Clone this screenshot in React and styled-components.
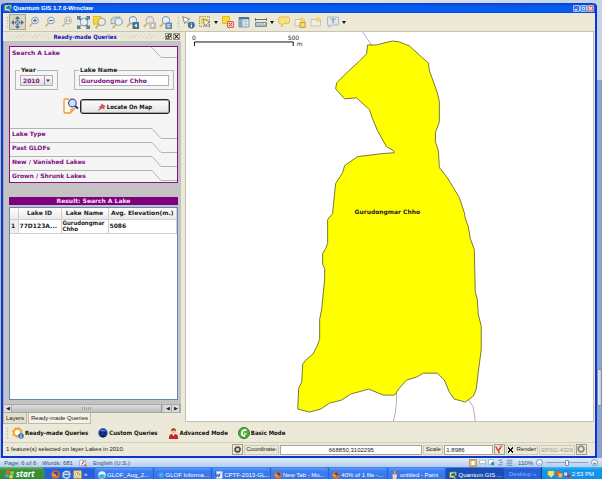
import { useState } from "react";
import styled, { createGlobalStyle, css } from "styled-components";

const verdana = `"DejaVu Sans", Verdana, sans-serif`;
const condensed = `"DejaVu Sans Condensed", "DejaVu Sans", sans-serif`;
const tahoma = `"Liberation Sans", Tahoma, sans-serif`;

// ---------- icons ----------

const Icon = ({ size = 12, children }) => (
  <svg width={size} height={size} viewBox="0 0 12 12" fill="none" aria-hidden="true">
    {children}
  </svg>
);

const Lens = ({ x = 7, y = 4.5, color = "#8ba0b2", fill = "#e4eef5" }) => (
  <>
    <path d={`M${x - 2.4} ${y + 2.6}L${x - 5.6} ${y + 6}`} stroke="#d9ab62" strokeWidth="1.5" />
    <circle cx={x} cy={y} r="3.4" fill={fill} stroke={color} strokeWidth="1" />
  </>
);

const PanIcon = () => (
  <Icon size={13}>
    <path d="M6 0L8.4 2.8H3.6zM6 12L3.6 9.2H8.4zM0 6L2.8 3.6V8.4zM12 6L9.2 8.4V3.6z" fill="#456f91" />
    <path d="M6 2.6L7.5 4.1 6 5.6 4.5 4.1zM6 6.4L7.5 7.9 6 9.4 4.5 7.9zM2.9 6L4.3 4.6 5.7 6 4.3 7.4zM9.1 6L7.7 7.4 6.3 6 7.7 4.6z" fill="#5d83a2" />
  </Icon>
);

const ZoomInIcon = () => (
  <Icon>
    <Lens />
    <path d="M5.2 4.5H8.8M7 2.7V6.3" stroke="#3f6685" />
  </Icon>
);

const ZoomOutIcon = () => (
  <Icon>
    <Lens />
    <path d="M5.2 4.5H8.8" stroke="#3f6685" />
  </Icon>
);

const ZoomActualIcon = () => (
  <Icon>
    <path d="M4.6 7L1.4 10.4" stroke="#c9b28a" strokeWidth="1.4" />
    <circle cx="7" cy="4.5" r="3.6" fill="#e8e6dc" stroke="#b3b3ad" />
    <path d="M5.5 3V6M8.5 3V6M7 3.4V4M7 5V5.6" stroke="#99998f" strokeWidth=".8" />
  </Icon>
);

const ZoomFullIcon = () => (
  <Icon size={13}>
    <Lens x={6.5} y={5.5} />
    <path d="M0 0H4L2.8 1.2 4.4 2.8 2.8 4.4 1.2 2.8 0 4zM12 0V4L10.8 2.8 9.2 4.4 7.6 2.8 9.2 1.2 8 0zM12 12H8L9.2 10.8 7.6 9.2 9.2 7.6 10.8 9.2 12 8zM0 12V8L1.2 9.2 2 8.4 3.4 9.8 2.8 10.8 4 12z" fill="#5a7d99" />
  </Icon>
);

const ZoomSelectionIcon = () => (
  <Icon size={13}>
    <path d="M.5 .5H7.5V7.5H.5z" fill="#f7dc35" stroke="#e2bd26" />
    <Lens x={8} y={5.4} fill="#f1eecb" />
  </Icon>
);

const ZoomLayerIcon = () => (
  <Icon size={13}>
    <path d="M1 3L4 1H9L7 7H1z" fill="#d4d9df" stroke="#a3adb6" />
    <Lens x={8} y={5.2} />
  </Icon>
);

const ZoomLastIcon = ({ muted, flip }) => (
  <Icon size={13}>
    <Lens x={6.4} y={4} color={muted ? "#b3b3ad" : "#8ba0b2"} fill={muted ? "#e8e6dc" : "#e4eef5"} />
    <path d="M6 5.6H12V12H6z" fill={muted ? "#bdbcb1" : "#46708f"} />
    <path d={flip ? "M8 7L10.4 8.8 8 10.6z" : "M10 7L7.6 8.8 10 10.6z"} fill="#fff" />
  </Icon>
);

const RefreshLensIcon = () => (
  <Icon size={13}>
    <Lens x={6.4} y={4} />
    <path d="M6 6H12V12H6z" fill="#6689a5" />
    <path d="M7.3 8.2H10.4M10.6 10H7.5" stroke="#fff" strokeWidth=".9" />
  </Icon>
);

const IdentifyIcon = () => (
  <Icon size={13}>
    <path d="M.6 .6L7 2.8 4.8 4 7 6.4 5.8 7.4 3.6 5 2.4 7z" fill="#fff" stroke="#6f7573" strokeWidth=".8" />
    <circle cx="8.6" cy="8.4" r="3.2" fill="#416c93" />
    <path d="M8.6 6.2V7M8.6 7.8V10.4" stroke="#fff" strokeWidth="1.1" />
  </Icon>
);

const SelectIcon = () => (
  <Icon size={12}>
    <path d="M.5 .5H10.5V10.5H.5z" fill="#e9e2b4" stroke="#a09a79" strokeDasharray="1.5 1" />
    <path d="M2 2H9V8H2z" fill="#f3da3f" />
    <path d="M4 3L11 6 8.6 7 11 10 9.6 11 7.4 8.2 5.8 10z" fill="#f2f2ec" stroke="#75766c" strokeWidth=".8" />
  </Icon>
);

const DeselectIcon = () => (
  <Icon size={12}>
    <path d="M.5 .5H7.5V7.5H.5z" fill="#f7dc35" stroke="#e2bd26" />
    <path d="M5.6 5.6H11.4V11.4H5.6z" fill="#f4d8cf" stroke="#d3584c" />
    <path d="M7 7L10 10M10 7L7 10" stroke="#cf3a34" />
  </Icon>
);

const TableIcon = () => (
  <Icon size={12}>
    <path d="M1 1.5H11V11H1z" fill="#e9f1f5" stroke="#7f99ab" />
    <path d="M1 1H11V3.4H1z" fill="#4d7594" />
    <path d="M1 3.4H4.2V11H1z" fill="#7d9cb3" />
    <path d="M4.2 3V11M7.6 3V11M1 5.5H11M1 8.2H11" stroke="#a6bac7" strokeWidth=".8" />
  </Icon>
);

const MeasureIcon = () => (
  <Icon size={12}>
    <path d="M.5 3.5H11.5M.5 2V5M11.5 2V5" stroke="#63717a" />
    <path d="M.5 6.5H11.5V10.5H.5z" fill="#aab7bf" stroke="#7f8b92" />
    <path d="M3 7V9M5.2 7V8.4M7.4 7V9M9.6 7V8.4" stroke="#eef1f2" strokeWidth=".8" />
  </Icon>
);

const TipIcon = () => (
  <Icon size={12}>
    <path d="M2.4 1H9.8Q11.5 1 11.5 2.8V6Q11.5 7.6 9.8 7.6H6L3.4 11V7.6H2.4Q.6 7.6 .6 6V2.8Q.6 1 2.4 1z" fill="#f8e27c" stroke="#d9bb5c" />
  </Icon>
);

const BookmarkIcon = ({ extra }) => (
  <Icon size={12}>
    <path d="M1 3.5H10.5V10H1z" fill="#f1eee0" stroke="#c9c4b0" />
    <path d="M8 .8L8.8 2.4 10.6 2.8 9.4 4 9.6 5.6 8.2 4.8 6.8 5.6 7 4 5.8 2.8 7.4 2.4z" fill="#f6d95a" stroke="#dfc25c" strokeWidth=".5" />
    {extra && <path d="M6 6.5H11.2V11.4H6z" fill="#f7dc70" stroke="#c79a28" />}
  </Icon>
);

const TextIcon = () => (
  <Icon size={12}>
    <path d="M.5 1H11.5V9H5L2 11.4V9H.5z" fill="#dfe7ee" stroke="#a9b8c4" />
    <path d="M3.6 3H8.6M6.1 3V7.6" stroke="#8195a3" strokeWidth="1.2" />
  </Icon>
);

const FindPageIcon = () => (
  <svg width="16" height="17" viewBox="0 0 16 17" fill="none" aria-hidden="true">
    <path d="M6 1H2.6Q1 1 1 2.6V13.4Q1 15 2.6 15H7L12 10" stroke="#f0962a" strokeWidth="1.3" fill="#fffaf0" />
    <path d="M7.4 15.6V10.6H12.4z" fill="#f7a53a" />
    <circle cx="9.4" cy="5" r="3.8" fill="#cfe3f5" stroke="#3f4f9c" strokeWidth="1.2" />
    <path d="M12 8L15 10.6" stroke="#27347f" strokeWidth="2" />
  </svg>
);

const PinIcon = () => (
  <Icon size={8}>
    <path d="M5.4 .6L11.4 5 9.6 6.2 9.4 9.6 6.8 8.2 4.4 9 .4 11.6 3 7.8 1.4 4.8 4.4 4.2z" fill="#d8535b" />
    <path d="M3 7.8L.4 11.6" stroke="#666" />
  </Icon>
);

const GearIcon = ({ size = 12, color = "#f2a52d", badge, hole = "#fff" }) => (
  <Icon size={size}>
    <circle cx="5.4" cy="5.4" r="3.6" fill={hole} stroke={color} strokeWidth="2" />
    <circle cx="5.4" cy="5.4" r="4.8" stroke={color} strokeWidth="1.2" strokeDasharray="1.9 1.87" />
    {badge && (
      <>
        <circle cx="9" cy="9" r="2.8" fill="#2d78c8" />
        <path d="M9 7.4V8M9 8.6V10.8" stroke="#fff" />
      </>
    )}
  </Icon>
);

const GlobeIcon = () => (
  <Icon size={10}>
    <circle cx="6" cy="6" r="5.6" fill="#173f9e" />
    <path d="M2 3Q6 1 10 3Q6 4.6 2 3z" fill="#4f8be0" />
    <path d="M2.5 6.2H5M7 6.2H9.5M3.6 9Q6 10.4 8.4 9" stroke="#07123f" strokeWidth="1.4" />
  </Icon>
);

const PersonIcon = () => (
  <Icon size={11}>
    <path d="M1 12Q.6 7 4 6.6H8Q11.4 7 11 12z" fill="#c92228" />
    <path d="M4.6 6.6L6 9 7.4 6.6z" fill="#fff" />
    <circle cx="6" cy="3.6" r="2.6" fill="#efbd92" />
    <path d="M3.4 3.2Q3.2 .2 6 .2T8.6 3.2Q6 1.6 3.4 3.2z" fill="#8a3d25" />
  </Icon>
);

const BasicIcon = () => (
  <Icon>
    <circle cx="6" cy="6" r="5.5" fill="#4fae3b" stroke="#2d7e28" />
    <path d="M8.4 3.4Q5 2 4 5.4T7 9" stroke="#fff" strokeWidth="1.8" />
    <path d="M5.8 5.4L9 6.4 6.4 8.4z" fill="#d8f3c8" />
  </Icon>
);

const QgisIcon = ({ size = 8 }) => (
  <Icon size={size}>
    <path d="M1 2H6V4H3.4V7H6V9.6H1z" fill="#e9e14a" />
    <path d="M6 1H11V7H8.6V3.4H6z" fill="#8bd04a" />
    <path d="M6 6L10.4 11H7z" fill="#f5f07a" />
  </Icon>
);

const FirefoxIcon = ({ size = 9 }) => (
  <Icon size={size}>
    <circle cx="6" cy="6" r="5.4" fill="#e9711c" />
    <circle cx="6.6" cy="5" r="3" fill="#35518f" />
    <path d="M1 4Q3 6 6.4 5.6 8 7.6 4 8.4 1.4 8 1 4z" fill="#f7a63a" />
  </Icon>
);

const IeIcon = () => (
  <Icon size={9}>
    <path d="M10.4 7.6A4.6 4.6 0 1 1 10.6 6H2.6" stroke="#b9e1ff" strokeWidth="2" />
    <path d="M1 10Q2 4 11 1.4" stroke="#f2cf55" />
  </Icon>
);

const OutlookIcon = () => (
  <Icon size={9}>
    <path d="M1 1H11V11H1z" fill="#f5e2ac" stroke="#d09d36" />
    <circle cx="6" cy="6" r="2.8" fill="#fff" stroke="#c68a2a" />
    <path d="M6 4.2V6H7.6" stroke="#4a5f93" />
  </Icon>
);

const WordIcon = () => (
  <Icon size={8}>
    <path d="M2 .5H11V11.5H2z" fill="#f3f7fd" stroke="#9db6db" />
    <path d="M.6 3L2.4 9 4.2 4.6 6 9 7.8 3" stroke="#2c56a5" strokeWidth="1.4" />
  </Icon>
);

const DiscIcon = () => (
  <Icon size={8}>
    <circle cx="6" cy="6" r="5.6" fill="#dff5ff" />
    <path d="M1 7Q6 3 11 7Q9 11.4 6 11.4T1 7z" fill="#35b3de" />
  </Icon>
);

const SparkIcon = () => (
  <Icon size={8}>
    <path d="M6 1V11M1 6H11M3 3L9 9M9 3L3 9" stroke="#4fc3ef" strokeWidth="1.2" />
  </Icon>
);

const PaintIcon = () => (
  <Icon size={8}>
    <path d="M2 5H9L8 12H3z" fill="#e8dcc0" />
    <path d="M3 5L1.6 .6M5.6 5V0M8 5L10.4 1" stroke="#d8503c" strokeWidth="1.6" />
    <path d="M5.6 5V0" stroke="#f0c33b" strokeWidth="1.6" />
  </Icon>
);

const FlagIcon = () => (
  <Icon size={10}>
    <path d="M1.6 2Q3.8 .6 5.8 2L5 5.6Q3 4.4 .8 5.6z" fill="#ee5a2b" />
    <path d="M6.6 2.4Q8.8 3.6 11 2.4L10.2 6Q8 7.2 5.8 6z" fill="#8fd14a" />
    <path d="M.6 6.6Q2.8 5.4 4.8 6.6L4 10.2Q2 9 0 10.2z" fill="#5b9df0" />
    <path d="M5.6 7Q7.8 8.2 10 7L9.2 10.6Q7 11.8 4.8 10.6z" fill="#f8cf3d" />
  </Icon>
);

// ---------- layout ----------

const GlobalStyle = createGlobalStyle`
  * {
    box-sizing: border-box;
  }
  body {
    margin: 0;
    background: #dbe7f5;
    font-family: ${tahoma};
    font-size: 6px;
    line-height: 8px;
    color: #222;
  }
  button, input, select {
    font: inherit;
    color: inherit;
    margin: 0;
    padding: 0;
    border: 0;
    background: none;
    border-radius: 0;
  }
  svg {
    display: block;
    flex: none;
  }
`;

const Desktop = styled.div`
  display: flex;
  flex-direction: column;
  min-height: 100vh;
`;

const Backdrop = styled.div`
  flex: 1;
  display: flex;
  padding: 3px 0 0 1px;
  background: linear-gradient(90deg, #aebfd8, #d9e3ef 20%, #e1e3e6 60%, #c4d3ea);
`;

const BackScroll = styled.div`
  display: flex;
  flex-direction: column;
  justify-content: flex-end;
  width: 5px;
  margin-top: 77px;
  padding-bottom: 52px;
  background: #8aa2cf;

  span {
    height: 37px;
    border: 1px solid #8290b0;
    background: linear-gradient(90deg, #e6eaf2, #bfc9de);
  }
`;

const Window = styled.main`
  flex: 1;
  display: flex;
  flex-direction: column;
  border: 2px solid #0a35d8;
  border-top: 0;
  border-radius: 4px 4px 0 0;
  background: #ece9d8;
`;

const TitleBar = styled.header`
  display: flex;
  align-items: center;
  gap: 1px;
  height: 10px;
  padding: 0 1px 0 1px;
  border-radius: 3px 3px 0 0;
  background: linear-gradient(#0a3fc4, #0759ee 30%, #0560f5 80%, #0347cf);
  color: #fff;

  h1 {
    flex: 1;
    margin: 0;
    font: bold 6px/10px ${tahoma};
  }
`;

const WindowButtons = styled.div`
  display: flex;
`;

const WindowButton = styled.button`
  width: 7px;
  height: 7px;
  border: 1px solid #a9c0f4;
  border-radius: 1px;
  background: ${({ $close }) => ($close ? "#e3552f" : "#3f74ea")};
`;

const ToolBar = styled.div`
  display: flex;
  align-items: center;
  height: 19px;
  padding-left: 3px;
  border-bottom: 1px solid #c8c4b2;
`;

const Grip = styled.span`
  flex: none;
  width: 3px;
  height: 13px;
  background: radial-gradient(#c4c0af 40%, transparent 50%) 0 0 / 3px 3px;
`;

const ToolGroup = styled.div`
  display: flex;
  width: ${({ $width }) => $width}px;
  margin-right: ${({ $gap = 0 }) => $gap}px;
`;

const Tool = styled.button`
  flex: 1;
  display: flex;
  align-items: center;
  justify-content: center;
  gap: 3px;
  height: 16px;
  border: 1px solid transparent;
  ${({ $menu }) =>
    $menu &&
    css`
      flex: 0 0 24px;
      &::after {
        content: "";
        border: 2px solid transparent;
        border-top: 3px solid #111;
        border-bottom: 0;
      }
    `}
  ${({ $pressed }) =>
    $pressed &&
    css`
      border-color: #aaa795;
      background: #d9d5c3;
    `}
`;

const Workspace = styled.div`
  flex: 1;
  display: flex;
`;

const Dock = styled.aside`
  display: flex;
  flex-direction: column;
  width: 178px;
`;

const DockTitle = styled.div`
  display: flex;
  align-items: center;
  gap: 1px;
  height: 9px;
  padding: 0 1px 0 3px;

  h2 {
    margin: 0 2px;
    font: bold 6px/9px ${condensed};
    color: #1414c8;
  }
`;

const Hatch = styled.span`
  flex: 1;
  height: 5px;
  background: repeating-linear-gradient(135deg, #ddd9c9 0 1px, transparent 1px 3px);
`;

const DockButton = styled.button`
  display: flex;
  align-items: center;
  justify-content: center;
  width: 7px;
  height: 7px;
  border: 1px solid #98958a;
  background: #f5f3ea;
`;

const DockBody = styled.div`
  flex: 1;
  display: flex;
  flex-direction: column;
  padding: 5px 3px 4px 5px;
  border-left: 1px solid #aaa;
  background: #c3c3c3;
`;

const Accordion = styled.section`
  border: 1px solid #8a108a;
  background: #f5f5f5;
`;

const SectionHead = styled.button`
  display: flex;
  width: 100%;
  height: 14px;
  font: bold 6px/10px ${verdana};
  color: #80107f;
  text-align: left;

  span {
    flex: 1;
    height: 14px;
    padding-left: 2px;
    border-top: 1px solid ${({ $first }) => ($first ? "transparent" : "#b4b4b4")};
  }

  &:last-child,
  &:last-child span,
  &:last-child svg {
    height: 12px;
  }
`;

const SearchForm = styled.form`
  padding: 4px 3px 13px 5px;
`;

const Fields = styled.div`
  display: flex;
  justify-content: space-between;
`;

const Group = styled.fieldset`
  width: ${({ $width }) => $width}px;
  min-width: 0;
  margin: 0;
  padding: 0 4px 3px;
  border: 1px solid #b6b6b6;

  legend {
    padding: 0 1px;
    font: bold 6px/10px ${verdana};
    color: #222;
  }
`;

const fieldBox = css`
  display: block;
  width: 100%;
  height: 11px;
  border: 1px solid #b0b0b0;
  background-color: #fff;
  font: bold 6px/9px ${verdana};
  color: #80107f;
`;

const TextField = styled.input`
  ${fieldBox}
  padding: 0 1px;
`;

const SelectWrap = styled.div`
  display: grid;
  align-items: center;

  select,
  svg {
    grid-area: 1 / 1;
  }

  svg {
    justify-self: end;
    pointer-events: none;
  }
`;

const YearSelect = styled.select`
  ${fieldBox}
  appearance: none;
  padding-left: 2px;
  background: linear-gradient(#fafafa, #dedede);
`;

const Actions = styled.div`
  display: flex;
  align-items: center;
  justify-content: flex-end;
  gap: 1px;
  margin-top: 8px;
  padding-right: 4px;
`;

const LocateButton = styled.button`
  display: flex;
  align-items: center;
  justify-content: center;
  gap: 1px;
  width: 90px;
  height: 15px;
  border: 1px solid #222;
  border-radius: 3px;
  background: linear-gradient(#fdfdfd, #e3e3e3);
  box-shadow: inset 0 0 0 1px #9aa3b0;
  font: bold 6px/12px ${condensed};
  color: #111;
`;

const ResultTitle = styled.h3`
  margin: 14px 0 2px;
  background: #7f007f;
  font: bold 6px/8px ${verdana};
  text-align: center;
  color: #f5e4f5;
`;

const ResultBox = styled.div`
  flex: 1;
  border: 1px solid #5f86bd;
  background: #fff;
`;

const ResultTable = styled.table`
  width: 100%;
  table-layout: fixed;
  border-collapse: collapse;
  font: bold 6px/6px ${verdana};
  color: #222;

  th,
  td {
    height: 14px;
    padding: 0 1px;
    border: 1px solid #cfcfcf;
    border-width: 0 1px 1px 0;
    text-align: left;
    white-space: nowrap;
  }

  thead th {
    height: 11px;
    background: linear-gradient(#fff, #e9e9e9);
    text-align: center;
  }

  tbody th {
    background: #eee;
  }
`;

const NameCell = styled.td`
  font-family: ${condensed};
`;

const ScrollBar = styled.div`
  display: flex;
  height: 9px;
  border: 1px solid #a9a9a9;
  background: #c9c9c9;
`;

const ScrollButton = styled.button`
  width: 8px;
  background: #dcdcdc;
  border-right: 1px solid #aaa;
  font-size: 5px;
  line-height: 7px;
`;

const ScrollThumb = styled.div`
  flex: 1;
  margin-right: 2px;
  border-right: 1px solid #999;
  background:
    repeating-linear-gradient(90deg, #a5a5a5 0 1px, transparent 1px 2px) center / 9px 3px no-repeat,
    linear-gradient(#dedede, #bcbcbc);
`;

const DockTabs = styled.div`
  display: flex;
  gap: 1px;
  height: 11px;
`;

const DockTab = styled.button`
  padding: 0 2px;
  border: 1px solid #bdb9a8;
  border-top: 0;
  background: ${({ $active }) => ($active ? "#f4f2e7" : "#e3dfcd")};
  font: 6px/9px ${tahoma};
`;

const MapPane = styled.div`
  flex: 1;
  display: flex;
  margin: 0 1px 2px 4px;
  border: 1px solid #c4c0b0;
  border-top: 0;
  background: #fff;

  svg {
    flex: 1;
    width: 100%;
    min-width: 0;
    height: auto;
  }
`;

const ModeBar = styled.nav`
  display: flex;
  align-items: center;
  gap: 10px;
  height: 18px;
  padding-left: 3px;

  span {
    margin-right: -7px;
  }
`;

const ModeButton = styled.button`
  display: flex;
  align-items: center;
  gap: 1px;
  font: bold 6px/12px ${condensed};
  color: #111;
`;

const StatusBar = styled.footer`
  display: flex;
  align-items: center;
  gap: 1px;
  height: 14px;
  padding: 0 8px 0 3px;
  border-top: 1px solid #d5d1c0;
  font: 6px/9px ${tahoma};

  p {
    flex: 1;
    margin: 0;
  }
`;

const StatusCell = styled.label`
  display: flex;
  align-items: center;
  justify-content: center;
  gap: 3px;
  min-width: ${({ $width = 0 }) => $width}px;
  height: 10px;
  padding: 0 1px;
  border: 1px solid #cdc9b8;
`;

const StatusButton = styled.button`
  display: flex;
  align-items: center;
  justify-content: center;
  width: 11px;
  height: 11px;
  border: 1px solid #a19e8e;
`;

const StatusInput = styled.input`
  width: ${({ $width }) => $width}px;
  height: 10px;
  padding: 0 1px;
  border: 1px solid #a8a593;
  background: #fff;
  text-align: ${({ $align = "left" }) => $align};
`;

const Epsg = styled.span`
  padding: 0 1px;
  border: 1px solid #cdc9b8;
  line-height: 8px;
  color: #a09d8f;
`;

const Tick = styled.input`
  appearance: none;
  width: 5px;
  height: 6px;

  &:checked {
    background:
      linear-gradient(45deg, transparent 38%, #111 38% 62%, transparent 62%),
      linear-gradient(-45deg, transparent 38%, #111 38% 62%, transparent 62%);
  }
`;

const WordStatus = styled.div`
  display: flex;
  align-items: center;
  gap: 6px;
  height: 9px;
  padding: 0 4px;
  background: linear-gradient(#e3edfb, #b4cdf0);
  color: #34527f;
`;

const Zoom = styled.div`
  display: flex;
  align-items: center;
  gap: 3px;
  margin-left: auto;

  input {
    appearance: none;
    width: 42px;
    height: 7px;
    background: linear-gradient(#8aa5cc, #8aa5cc) center / 100% 1px no-repeat;
  }

  input::-webkit-slider-thumb {
    appearance: none;
    width: 4px;
    height: 6px;
    border: 1px solid #7590bb;
    border-radius: 1px;
    background: #f5f9ff;
  }
`;

const ViewIcons = styled.div`
  display: flex;
  gap: 1px;
  margin-right: 2px;
`;

const ViewButton = styled.button`
  display: flex;
  align-items: center;
  justify-content: center;
  width: 8px;
  height: 8px;
  border: 1px solid ${({ $on }) => ($on ? "#d59a3c" : "transparent")};
  background: ${({ $on }) => ($on ? "#fbd289" : "none")};
`;

const Round = styled.button`
  width: 7px;
  height: 7px;
  border: 1px solid #7893bd;
  border-radius: 50%;
  background: #f2f7ff;
  font-size: 6px;
  line-height: 4px;
`;

const TaskBar = styled.div`
  display: flex;
  height: 14px;
  background: linear-gradient(#4a8cf3, #245edb 15%, #2560de 85%, #1941a5);
  color: #fff;
`;

const StartButton = styled.button`
  display: flex;
  align-items: center;
  gap: 1px;
  width: 45px;
  padding-left: 5px;
  border-radius: 0 5px 5px 0;
  background: linear-gradient(#6fb96c, #3a933a 20%, #358f35 80%, #256b26);
  font: italic bold 8px/14px "Open Sans", sans-serif;
`;

const QuickLaunch = styled.div`
  display: flex;
  align-items: center;
  gap: 2px;
  width: 50px;
  padding-left: 6px;
`;

const Tasks = styled.div`
  flex: 1;
  display: flex;
  gap: 1px;
  min-width: 0;
`;

const Task = styled.button`
  flex: 1;
  display: flex;
  align-items: center;
  gap: 1px;
  min-width: 0;
  height: 13px;
  margin-top: 1px;
  padding-left: 3px;
  border-radius: 2px;
  background: ${({ $active }) => ($active ? "#1c4cb6" : "linear-gradient(#5c9bfa, #3b7cf0 25%, #3574e6)")};
  white-space: nowrap;
`;

const DesktopLink = styled.div`
  width: 37px;
  padding-left: 5px;
  line-height: 14px;
  color: #8fb2f2;
`;

const Tray = styled.div`
  display: flex;
  align-items: center;
  width: 61px;
  padding: 0 8px 0 5px;
  border-left: 1px solid #0d3d9c;
  background: linear-gradient(#3fb8f5, #1497ea 20%, #1290e8 85%, #0f6fc4);

  time {
    margin-left: auto;
  }
`;

// ---------- pieces ----------

const LAKE =
  "M368 45L377 45 393 41 400 42 410 46 422 57 429 63 430 71 433 79 438 93 440 102 440 122 436 133 436 142 439 151 440 168 448 178 460 198 465 213 466 219 469 227 471 239 475 250 476 293 478 300 479 315 482 327 482 350 479 373 477 390 474 397 466 403 455 400 450 393 445 381 438 374 424 374 417 378 407 381 400 389 395 396 384 396 379 394 369 390 351 395 342 401 330 404 321 410 310 413 298 410 299 389 302 383 303 365 306 361 313 355 317 348 320 340 320 320 322 310 325 280 325 269 323 265 323 254 326 249 328 244 328 220 333 214 334 203 336 184 343 173 345 166 358 157 382 154 395 153 394 151 387 147 378 131 373 119 370 110 357 98 345 99 336 89 337 83 347 73 360 61 367 54z";

const MapView = () => (
  <MapPane>
    <svg viewBox="186 32 408 390" preserveAspectRatio="xMinYMin meet" role="img" aria-label="Lake map">
      <g stroke="#c0a3cc" fill="none">
        <path d="M363 32L372 45" />
        <path d="M397 393V404L396 413 394 422" />
        <path d="M469 400L474 408 476 422" />
      </g>
      <path d={LAKE} fill="#ffff00" stroke="#77773a" strokeWidth="1" />
      <path d="M194.5 46V42H293.5V46" fill="none" stroke="#111" />
      <g fontFamily="DejaVu Sans, sans-serif" fontSize="6" fill="#222">
        <text x="192" y="40">0</text>
        <text x="288" y="40">500</text>
        <text x="297" y="46">m</text>
        <text x="355" y="214" fontWeight="bold">Gurudongmar Chho</text>
      </g>
    </svg>
  </MapPane>
);

const Section = ({ title, first, onClick }) => (
  <SectionHead type="button" $first={first} onClick={onClick}>
    <span>{title}</span>
    <svg width="26" height="14" fill="none" aria-hidden="true">
      <path d="M0 .5H1L10 10.5H26" stroke="#b4b4b4" />
    </svg>
  </SectionHead>
);

const SearchPanel = () => {
  const [name, setName] = useState("Gurudongmar Chho");
  return (
    <Accordion>
      <Section title="Search A Lake" first />
      <SearchForm onSubmit={(e) => e.preventDefault()}>
        <Fields>
          <Group $width={43}>
            <legend>
              <label htmlFor="year">Year</label>
            </legend>
            <SelectWrap>
              <YearSelect id="year" defaultValue="2010">
                <option>2010</option>
              </YearSelect>
              <svg width="9" height="11" fill="none" aria-hidden="true">
                <path d="M.5 1V10" stroke="#9d9d9d" />
                <path d="M2 4.5H6L4 7z" fill="#80107f" />
              </svg>
            </SelectWrap>
          </Group>
          <Group $width={100}>
            <legend>
              <label htmlFor="lake">Lake Name</label>
            </legend>
            <TextField id="lake" value={name} onChange={(e) => setName(e.target.value)} />
          </Group>
        </Fields>
        <Actions>
          <FindPageIcon />
          <LocateButton type="submit">
            <PinIcon />
            Locate On Map
          </LocateButton>
        </Actions>
      </SearchForm>
      <Section title="Lake Type" />
      <Section title="Past GLOFs" />
      <Section title="New / Vanished Lakes" />
      <Section title="Grown / Shrunk Lakes" />
    </Accordion>
  );
};

const Results = () => (
  <ResultBox>
    <ResultTable>
      <colgroup>
        <col width="8" />
        <col width="43" />
        <col width="47" />
        <col />
      </colgroup>
      <thead>
        <tr>
          <th></th>
          <th>Lake ID</th>
          <th>Lake Name</th>
          <th>Avg. Elevation(m.)</th>
        </tr>
      </thead>
      <tbody>
        <tr>
          <th scope="row">1</th>
          <td>77D123A...</td>
          <NameCell>
            Gurudongmar
            <br />
            Chho
          </NameCell>
          <td>5086</td>
        </tr>
      </tbody>
    </ResultTable>
  </ResultBox>
);

const App = () => {
  return (
    <Desktop>
      <GlobalStyle />
      <Backdrop>
        <Window>
          <TitleBar>
            <QgisIcon />
            <h1>Quantum GIS 1.7.0-Wroclaw</h1>
            <WindowButtons>
              <WindowButton aria-label="Minimize">
                <Icon size={5}><path d="M2 9H8" stroke="#fff" strokeWidth="3" /></Icon>
              </WindowButton>
              <WindowButton aria-label="Maximize">
                <Icon size={5}><path d="M3 3H9V9H3z" stroke="#fff" strokeWidth="2" /></Icon>
              </WindowButton>
              <WindowButton $close aria-label="Close">
                <Icon size={5}><path d="M2 2L10 10M10 2L2 10" stroke="#fff" strokeWidth="2.5" /></Icon>
              </WindowButton>
            </WindowButtons>
          </TitleBar>

          <ToolBar>
            <Grip />
            <ToolGroup $width={165} $gap={3}>
              <Tool $pressed aria-label="Pan"><PanIcon /></Tool>
              <Tool aria-label="Zoom in"><ZoomInIcon /></Tool>
              <Tool aria-label="Zoom out"><ZoomOutIcon /></Tool>
              <Tool aria-label="Zoom to pixel size"><ZoomActualIcon /></Tool>
              <Tool aria-label="Zoom full"><ZoomFullIcon /></Tool>
              <Tool aria-label="Zoom to selection"><ZoomSelectionIcon /></Tool>
              <Tool aria-label="Zoom to layer"><ZoomLayerIcon /></Tool>
              <Tool aria-label="Zoom last"><ZoomLastIcon /></Tool>
              <Tool aria-label="Zoom next"><ZoomLastIcon muted flip /></Tool>
              <Tool aria-label="Refresh"><RefreshLensIcon /></Tool>
            </ToolGroup>
            <Grip />
            <ToolGroup $width={168}>
              <Tool aria-label="Identify"><IdentifyIcon /></Tool>
              <Tool $menu aria-label="Select"><SelectIcon /></Tool>
              <Tool aria-label="Deselect"><DeselectIcon /></Tool>
              <Tool aria-label="Attribute table"><TableIcon /></Tool>
              <Tool $menu aria-label="Measure"><MeasureIcon /></Tool>
              <Tool aria-label="Map tips"><TipIcon /></Tool>
              <Tool aria-label="New bookmark"><BookmarkIcon extra /></Tool>
              <Tool aria-label="Bookmarks"><BookmarkIcon /></Tool>
              <Tool $menu aria-label="Annotation"><TextIcon /></Tool>
            </ToolGroup>
          </ToolBar>

          <Workspace>
            <Dock>
              <DockTitle>
                <Hatch />
                <h2>Ready-made Queries</h2>
                <Hatch />
                <DockButton aria-label="Float">
                  <Icon size={5}>
                    <path d="M5 1H11V7H5zM1 5H7V11H1z" stroke="#222" strokeWidth="2" />
                  </Icon>
                </DockButton>
                <DockButton aria-label="Close panel">
                  <Icon size={5}>
                    <path d="M1 1L11 11M11 1L1 11" stroke="#222" strokeWidth="2.5" />
                  </Icon>
                </DockButton>
              </DockTitle>
              <DockBody>
                <SearchPanel />
                <ResultTitle>Result: Search A Lake</ResultTitle>
                <Results />
              </DockBody>
              <ScrollBar>
                <ScrollButton aria-label="Scroll left">◀</ScrollButton>
                <ScrollThumb />
                <ScrollButton aria-label="Page left">◀</ScrollButton>
                <ScrollButton aria-label="Scroll right">▶</ScrollButton>
              </ScrollBar>
              <DockTabs>
                <DockTab>Layers</DockTab>
                <DockTab $active>Ready-made Queries</DockTab>
              </DockTabs>
            </Dock>
            <MapView />
          </Workspace>

          <ModeBar>
            <Grip />
            <ModeButton><GearIcon badge />Ready-made Queries</ModeButton>
            <ModeButton><GlobeIcon />Custom Queries</ModeButton>
            <ModeButton><PersonIcon />Advanced Mode</ModeButton>
            <ModeButton><BasicIcon />Basic Mode</ModeButton>
          </ModeBar>

          <StatusBar>
            <p>1 feature(s) selected on layer Lakes in 2010.</p>
            <StatusButton aria-label="Toggle extents">
              <GearIcon size={8} color="#444" hole="#ccc" />
            </StatusButton>
            <StatusCell htmlFor="coord" $width={34}>Coordinate:</StatusCell>
            <StatusInput id="coord" $width={142} $align="center" defaultValue="668850,3102295" />
            <StatusCell htmlFor="scale" $width={20}>Scale</StatusCell>
            <StatusInput id="scale" $width={49} defaultValue="1:8986" />
            <StatusButton aria-label="Stop rendering">
              <Icon size={9}>
                <path d="M1 2L6 11M9 1L5 7" stroke="#c8403a" strokeWidth="2" />
                <path d="M5 1H11L8 5z" fill="#e58a80" />
              </Icon>
            </StatusButton>
            <StatusCell $width={32}>
              <Tick type="checkbox" defaultChecked />
              Render
            </StatusCell>
            <Epsg>EPSG:4326</Epsg>
            <StatusButton aria-label="Projection">
              <GearIcon size={9} color="#8b897e" hole="#ece9d8" />
            </StatusButton>
          </StatusBar>
        </Window>
        <BackScroll>
          <span />
        </BackScroll>
      </Backdrop>

      <WordStatus>
        <span>Page: 6 of 6</span>
        <span>Words: 681</span>
        <Icon size={8}>
          <path d="M1 2H10V10H1z" fill="#fff" stroke="#7d97c4" />
          <path d="M4 8L8 3M8 8L11 11" stroke="#d8362e" strokeWidth="1.8" />
        </Icon>
        <span>English (U.S.)</span>
        <Zoom>
          <ViewIcons>
            <ViewButton $on aria-label="Print layout">
              <Icon size={6}><path d="M2 1H10V11H2z" fill="#fff" stroke="#8a7a55" /></Icon>
            </ViewButton>
            <ViewButton aria-label="Full screen">
              <Icon size={7}><path d="M1 2H11V8H1zM3 11L6 8 9 11" fill="#fff" stroke="#7a94bd" /></Icon>
            </ViewButton>
            <ViewButton aria-label="Web layout">
              <Icon size={7}>
                <path d="M1 1H9V9H1z" fill="#fff" stroke="#7a94bd" />
                <circle cx="8" cy="8" r="3" fill="#3f8f8a" />
              </Icon>
            </ViewButton>
            <ViewButton aria-label="Outline">
              <Icon size={7}><path d="M2 2H9M5 6H10M2 10H9" stroke="#6a86b4" strokeWidth="1.6" /></Icon>
            </ViewButton>
            <ViewButton aria-label="Draft">
              <Icon size={7}><path d="M1 2H11M1 5H11M1 8H11M1 11H11" stroke="#7a94bd" strokeWidth="1.6" /></Icon>
            </ViewButton>
          </ViewIcons>
          <span>110%</span>
          <Round aria-label="Zoom out">-</Round>
          <input type="range" aria-label="Zoom" defaultValue="50" />
          <Round aria-label="Zoom in">+</Round>
        </Zoom>
      </WordStatus>

      <TaskBar>
        <StartButton><FlagIcon />start</StartButton>
        <QuickLaunch>
          <FirefoxIcon />
          <IeIcon />
          <OutlookIcon />
          <span>»</span>
        </QuickLaunch>
        <Tasks>
          <Task><DiscIcon />GLOF_Aug_2...</Task>
          <Task><SparkIcon />GLOF Informa...</Task>
          <Task><WordIcon />CPTF-2013-GL...</Task>
          <Task><FirefoxIcon size={8} />New Tab - Mo...</Task>
          <Task><FirefoxIcon size={8} />40% of 1 file -...</Task>
          <Task><PaintIcon />untitled - Paint</Task>
          <Task $active><QgisIcon size={8} />Quantum GIS ...</Task>
        </Tasks>
        <DesktopLink>Desktop »</DesktopLink>
        <Tray>
          <Icon size={8}>
            <path d="M1 1H11V7L6 11.6 1 7z" fill="#f3e07a" stroke="#5aa04a" />
          </Icon>
          <Icon size={8}>
            <path d="M1 2H8V8H1z" fill="#e35a2a" />
            <path d="M5 5H11V11H5z" fill="#f2b63a" />
          </Icon>
          <Icon size={8}>
            <path d="M1 3H7V9H1z" fill="#cfe2fb" stroke="#2d4f9a" />
            <path d="M7 7L11 11M11 7L7 11" stroke="#e0281e" strokeWidth="2" />
          </Icon>
          <time>2:53 PM</time>
        </Tray>
      </TaskBar>
    </Desktop>
  );
};

export default App;
